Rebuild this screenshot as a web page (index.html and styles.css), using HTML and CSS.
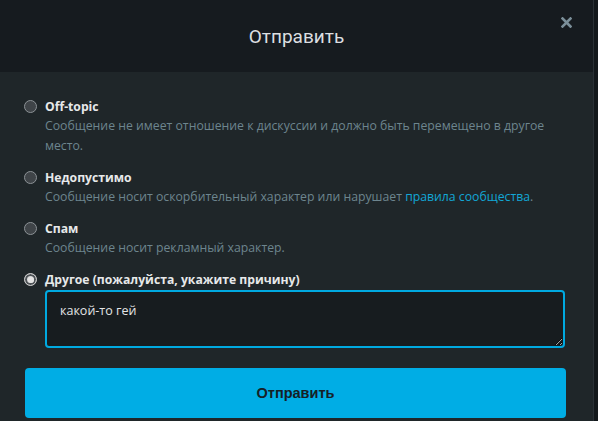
FILE: index.html
```html
<!DOCTYPE html>
<html lang="ru">
<head>
<meta charset="utf-8">
<link rel="stylesheet" href="styles.css">
</head>
<body>
<div class="modal">
  <div class="modal-header">
    <h1 class="title">Отправить</h1>
    <button class="close" aria-label="Закрыть">
      <svg width="11" height="11" viewBox="0 0 11 11"><path d="M1.5 1.5 L9.5 9.5 M9.5 1.5 L1.5 9.5" stroke="#7b8f99" stroke-width="2.6" stroke-linecap="square"/></svg>
    </button>
  </div>
  <div class="modal-body">
    <label class="option">
      <span class="radio"></span>
      <span class="option-text">
        <span class="option-title">Off-topic</span>
        <span class="option-desc">Сообщение не имеет отношение к дискуссии и должно быть перемещено в другое место.</span>
      </span>
    </label>
    <label class="option">
      <span class="radio"></span>
      <span class="option-text">
        <span class="option-title">Недопустимо</span>
        <span class="option-desc">Сообщение носит оскорбительный характер или нарушает <a class="link" href="#">правила сообщества</a>.</span>
      </span>
    </label>
    <label class="option">
      <span class="radio"></span>
      <span class="option-text">
        <span class="option-title">Спам</span>
        <span class="option-desc">Сообщение носит рекламный характер.</span>
      </span>
    </label>
    <label class="option option-last">
      <span class="radio checked"></span>
      <span class="option-text">
        <span class="option-title">Другое (пожалуйста, укажите причину)</span>
        <textarea class="reason">какой-то гей</textarea>
      </span>
    </label>
    <button class="submit">Отправить</button>
  </div>
</div>
</body>
</html>
```
FILE: styles.css
```css
html, body {
  margin: 0;
  padding: 0;
  background: #13181b;
  height: 100%;
  overflow: hidden;
}
body {
  font-family: "Open Sans", "Noto Sans", sans-serif;
}
.modal {
  width: 593px;
  height: 421px;
  background: #1f2629;
  border-right: 1px solid #2a3136;
}
.modal-header {
  height: 72px;
  background: #161b1f;
  display: flex;
  align-items: center;
  justify-content: center;
  position: relative;
}
.title {
  margin: 0;
  font-family: Roboto, "Noto Sans", sans-serif;
  font-weight: 400;
  font-size: 19px;
  color: #dcdfe1;
  padding-top: 1px;
}
.close {
  position: absolute;
  top: 17px;
  right: 21px;
  background: none;
  border: 0;
  padding: 0;
  width: 11px;
  height: 11px;
  display: flex;
}
.modal-body {
  padding: 26px 27px 0 25px;
}
.option {
  display: flex;
  align-items: flex-start;
  gap: 8px;
  margin-bottom: 13px;
}
.option-last {
  margin-bottom: 20px;
}
.radio {
  flex: none;
  width: 11px;
  height: 11px;
  border-radius: 50%;
  background: #3f4448;
  border: 1px solid #8c9296;
  margin-top: 2px;
  margin-left: -1px;
}
.radio.checked {
  background: #d8d8d8;
  border: 1px solid #c9c9c9;
  box-shadow: inset 0 0 0 2px #4d5256;
  position: relative;
}
.radio.checked::after {
  content: "";
  position: absolute;
  left: 2.5px;
  top: 2.5px;
  width: 6px;
  height: 6px;
  border-radius: 50%;
  background: #e4e4e4;
}
.option-text {
  display: flex;
  flex-direction: column;
  flex: 1;
}
.option-title {
  font-weight: 700;
  font-size: 12.2px;
  color: #e7e9ea;
  line-height: 18px;
}
.option-desc {
  font-size: 12.25px;
  color: #6d858e;
  line-height: 20px;
}
.link {
  color: #12a6d6;
  text-decoration: none;
}
.reason {
  margin-top: 1px;
  box-sizing: border-box;
  width: 520px;
  height: 58px;
  background: #171c1f;
  border: 2px solid #00a9e0;
  border-radius: 4px;
  color: #e3e5e6;
  font-family: "Open Sans", "Noto Sans", sans-serif;
  font-size: 12.5px;
  line-height: 18px;
  padding: 10px 13px;
  outline: none;
  resize: both;
}
.submit {
  display: block;
  width: 541px;
  height: 50px;
  background: #00ade5;
  border: 0;
  border-radius: 4px;
  color: #162026;
  font-family: "Liberation Sans", Arial, sans-serif;
  font-weight: 700;
  font-size: 14.5px;
}
```
